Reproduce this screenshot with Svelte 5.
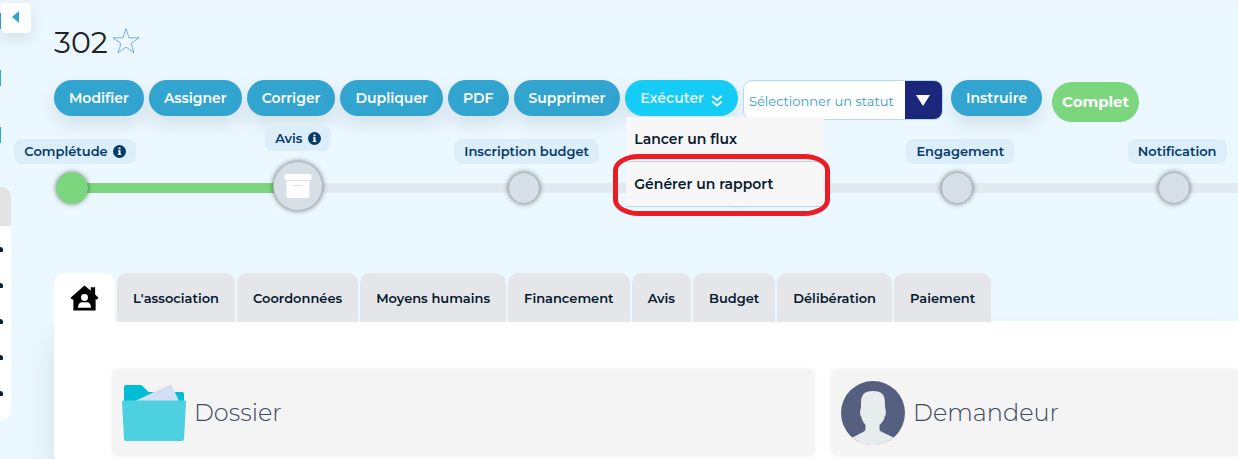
<script lang="ts">
	type Step = { label?: string; info?: boolean; state?: 'done' | 'current' };

	const actions = ['Modifier', 'Assigner', 'Corriger', 'Dupliquer', 'PDF', 'Supprimer'];
	const reports = ['Lancer un flux', 'Générer un rapport'];

	const steps: Step[] = [
		{ label: 'Complétude', info: true, state: 'done' },
		{ label: 'Avis', info: true, state: 'current' },
		{ label: 'Inscription budget' },
		{},
		{ label: 'Engagement' },
		{ label: 'Notification' }
	];

	const tabs = [
		"L'association",
		'Coordonnées',
		'Moyens humains',
		'Financement',
		'Avis',
		'Budget',
		'Délibération',
		'Paiement'
	];

	let menuOpen = $state(true);
	let highlighted = $state('Générer un rapport');
	let activeTab = $state('home');
</script>

<div class="page">
	<button class="collapse" aria-label="Replier le menu">
		<svg viewBox="0 0 8 12" width="8" height="12"><path d="M7 0v12L0 6z" fill="#32a4d0" /></svg>
	</button>

	<aside class="sidebar">
		<div class="dots"><i></i><i></i><i></i></div>
		<div class="side-card">
			<div class="side-head"></div>
			<ul>
				<li></li>
				<li></li>
				<li></li>
				<li></li>
				<li></li>
			</ul>
		</div>
	</aside>

	<main>
		<header class="title">
			<h1>302</h1>
			<button class="star" aria-label="Favori">
				<svg viewBox="0 0 28 28" width="28" height="28">
					<path
						d="M14 1.500l3 9.300h10l-8 5.700 3 9.300-8-5.700-8 5.700 3-9.300-8-5.700h10z"
						fill="none"
						stroke="#5b9bd5"
						stroke-width="0.800"
					/>
				</svg>
			</button>
		</header>

		<div class="toolbar">
			{#each actions as action}
				<button class="btn">{action}</button>
			{/each}
			<div class="dropdown">
				<button class="btn open" aria-expanded={menuOpen} onclick={() => (menuOpen = !menuOpen)}>
					Exécuter
					<svg viewBox="0 0 12 12" width="12" height="12">
						<path d="M1.200 1L6 5l4.800-4M1.200 6.500L6 10.500l4.800-4" fill="none" stroke="#fff" stroke-width="1.800" />
					</svg>
				</button>
				{#if menuOpen}
					<ul class="menu">
						{#each reports as item}
							<li class:highlighted={item === highlighted}>
								<a href="#{item}" onclick={() => (highlighted = item)}>{item}</a>
							</li>
						{/each}
					</ul>
				{/if}
			</div>
			<div class="status">
				<select aria-label="Statut">
					<option>Sélectionner un statut</option>
				</select>
				<span class="arrow">
					<svg viewBox="0 0 14 11" width="14" height="11"><path d="M0 0h14L7 11z" fill="#fff" /></svg>
				</span>
			</div>
			<button class="btn instruct">Instruire</button>
			<span class="complete">Complet</span>
		</div>

		<ol class="stepper">
			{#each steps as step}
				<li class={step.state}>
					<div class="node">
						{#if step.label}
							<span class="label">
								{step.label}
								{#if step.info}
									<svg viewBox="0 0 13 13" width="13" height="13">
										<circle cx="6.500" cy="6.500" r="6.500" fill="#043a6b" />
										<path d="M5.500 2.500h2v1.800h-2zM5 5.300h2.500v3.500h.8v1.200H4.800V8.800h.8V6.500H5z" fill="#fff" />
									</svg>
								{/if}
							</span>
						{/if}
						<span class="circle">
							{#if step.state === 'current'}
								<svg viewBox="0 0 28 24" width="28" height="24">
									<rect x="0.500" y="0" width="27" height="6" rx="1.500" fill="#fff" />
									<path d="M2.500 7h23v15a2 2 0 0 1-2 2h-19a2 2 0 0 1-2-2z" fill="#fff" />
									<path d="M9.500 11.500h9" stroke="#d5dfe5" />
								</svg>
							{/if}
						</span>
					</div>
					<div class="line"></div>
				</li>
			{/each}
		</ol>

		<nav class="tabs">
			<button class="home" class:active={activeTab === 'home'} aria-label="Accueil" onclick={() => (activeTab = 'home')}>
				<svg viewBox="0 0 30 26" width="29" height="26">
					<path d="M15 0l6.500 5.500V2H26v7.500l3.500 3.200-1.800 2.200L26.500 14v12h-23V14l-1.200 .9-1.800-2.200z" fill="#000" />
					<circle cx="15" cy="12.500" r="3.600" fill="#fff" />
					<path d="M8.300 23.200c0-4 2.200-5.700 4.200-5.700h5c2 0 4.200 1.700 4.200 5.700z" fill="#fff" />
				</svg>
			</button>
			{#each tabs as tab}
				<button class:active={activeTab === tab} onclick={() => (activeTab = tab)}>{tab}</button>
			{/each}
		</nav>

		<section class="panel">
			<article class="card">
				<svg viewBox="0 0 64 64" width="64" height="64">
					<path d="M2 20V6a2 2 0 0 1 2-2h14q1.500 0 2.500 1l6 6H60a2 2 0 0 1 2 2v8z" fill="#00bcd6" />
					<path d="M13 20L47 4q2-.8 3 1l7 15z" fill="#d3e0f4" />
					<path d="M1 19.500h62q1 0 1 1.500l-2 37q0 2-2 2H4q-2 0-2-2L0 21q0-1.500 1-1.500z" fill="#4dd0e0" />
				</svg>
				<h2>Dossier</h2>
			</article>
			<article class="card">
				<svg viewBox="0 0 64 64" width="64" height="64">
					<circle cx="32" cy="32" r="32" fill="#556080" />
					<path
						d="M11.500 56.500L23 50.500q1.500-1 1.500-2.500V44c-2.500-3-4-6-4.200-8.500-1.500-1-1.500-6-.3-9 0-6-.2-10 2.300-13 2-2.600 5.500-3.500 9.700-3.500s7.700.9 9.700 3.500c2.500 3 2.300 7 2.300 13 1.200 3 1.200 8-.3 9-.2 2.500-1.700 5.500-5.200 8.500v4q0 1.500 1.500 2.500l12.500 6C47 61.500 39.500 64 32 64s-15-2.500-20.500-7.500z"
						fill="#e7eced"
					/>
				</svg>
				<h2>Demandeur</h2>
			</article>
		</section>
	</main>
</div>

<style>
	:global(body) {
		background: #ebf8ff;
	}

	.page {
		position: relative;
		display: flex;
		min-height: 100vh;
		overflow: hidden;
		background: linear-gradient(#eef4fe, #ebf8ff 10px);
		font-family: Montserrat, Inter, 'Open Sans', sans-serif;
	}

	button {
		border: 0;
		padding: 0;
		font-family: inherit;
		cursor: pointer;
	}

	ul,
	ol {
		margin: 0;
		padding: 0;
		list-style: none;
	}

	.collapse {
		position: absolute;
		top: 3px;
		left: 1px;
		z-index: 2;
		width: 30px;
		height: 30px;
		border-radius: 4px;
		background: #fff;
		box-shadow: 0 6px 16px rgba(0, 0, 0, 0.1);
	}

	.sidebar {
		flex: 0 0 11px;
		width: 11px;
		overflow: hidden;
	}

	.dots {
		box-sizing: border-box;
		height: 187px;
		padding-top: 13px;
		display: flex;
		flex-direction: column;
		gap: 41px;
	}

	.dots i {
		width: 1px;
		height: 16px;
		background: #32a4d0;
	}

	.side-card {
		height: 233px;
		background: #fff;
		border-radius: 0 12px 14px 0;
		overflow: hidden;
	}

	.side-head {
		height: 39px;
		background: #e4e4e4;
	}

	.side-card ul {
		padding-top: 21px;
		display: flex;
		flex-direction: column;
		gap: 31px;
	}

	.side-card li {
		width: 3px;
		height: 5px;
		border-radius: 0 3px 1px 0;
		background: #06203a;
	}

	main {
		flex: 1;
		min-width: 0;
		display: flex;
		flex-direction: column;
		padding: 24px 0 0 43px;
	}

	.title {
		display: flex;
		align-items: center;
		gap: 4px;
		height: 36px;
	}

	h1 {
		margin: 0;
		font-size: 30px;
		font-weight: 400;
		color: #222;
	}

	.star {
		height: 36px;
		background: none;
	}

	.toolbar {
		display: flex;
		align-items: flex-start;
		gap: 5px;
		margin-top: 20px;
	}

	.btn {
		height: 36px;
		padding: 0 15px;
		border-radius: 18px;
		background: #32a4d0;
		box-shadow: 0 8px 20px rgba(0, 0, 0, 0.1);
		color: #fff;
		font-size: 14px;
		font-weight: 600;
		white-space: nowrap;
	}

	.btn.open {
		display: flex;
		align-items: center;
		gap: 7px;
		background: #15ccf6;
		color: #dff3fb;
	}

	.open svg {
		margin-top: 6px;
	}

	.dropdown {
		position: relative;
	}

	.menu {
		position: absolute;
		top: 37px;
		left: 1px;
		z-index: 3;
		width: 198px;
		background: #f7f7f7;
	}

	.menu li {
		position: relative;
		border-bottom: 1px solid #b4d8ee;
	}

	.menu a {
		display: block;
		padding: 0 8px;
		line-height: 44px;
		color: #06192e;
		font-size: 14px;
		font-weight: 600;
		text-decoration: none;
	}

	.menu .highlighted::after {
		content: '';
		position: absolute;
		inset: -8px -6px -10px -13px;
		border: 5px solid #ed1c24;
		border-radius: 26px / 16px;
		pointer-events: none;
	}

	.status {
		position: relative;
		width: 200px;
		height: 40px;
	}

	.status select {
		width: 100%;
		height: 100%;
		padding: 2px 40px 0 5px;
		border: 1px solid #b4d8ee;
		border-radius: 9px;
		appearance: none;
		background: #fff;
		color: #3a9cca;
		font-family: inherit;
		font-size: 13px;
	}

	.arrow {
		position: absolute;
		top: 1px;
		right: 1px;
		bottom: 1px;
		width: 37px;
		display: flex;
		align-items: center;
		justify-content: center;
		border-radius: 0 8px 8px 0;
		background: #1c267a;
		pointer-events: none;
	}

	.instruct {
		margin-left: 3px;
	}

	.complete {
		margin: 2px 0 0 5px;
		padding: 0 10px;
		border-radius: 20px;
		background: #7bd67e;
		color: #fff;
		font-size: 15px;
		font-weight: 700;
		line-height: 40px;
	}

	.stepper {
		display: flex;
		margin-top: 40px;
	}

	.stepper li {
		flex: 18 0 auto;
		display: flex;
		align-items: center;
		height: 52px;
	}

	.stepper li:last-child {
		flex-grow: 5;
	}

	.node {
		position: relative;
		display: flex;
		justify-content: center;
		width: 36px;
	}

	.label {
		position: absolute;
		bottom: 100%;
		display: flex;
		align-items: center;
		gap: 5px;
		margin: 0 0 8px 6px;
		padding: 0 10px;
		border-radius: 8px;
		background: #dceef9;
		color: #043a6b;
		font-size: 13px;
		font-weight: 600;
		line-height: 25px;
		white-space: nowrap;
	}

	.circle {
		box-sizing: border-box;
		z-index: 1;
		display: flex;
		align-items: center;
		justify-content: center;
		width: 32px;
		height: 32px;
		border: 1px solid #b4bbc0;
		border-radius: 50%;
		background: #d5dfe5;
		box-shadow: 0 0 5px rgba(0, 0, 0, 0.5);
	}

	.done .circle {
		border-color: #7bd67e;
		background: #7bd67e;
	}

	.current .node {
		width: 54px;
		padding-bottom: 4px;
	}

	.current .circle {
		width: 50px;
		height: 50px;
	}

	.current .label {
		margin: 0 0 10px;
	}

	.line {
		flex: 1;
		height: 10px;
		margin: 0 -3px;
		background: #e0eaf0;
	}

	.done .line {
		background: #7bd67e;
	}

	.tabs {
		position: relative;
		z-index: 1;
		display: flex;
		gap: 2px;
		margin: 59px 0 -1px;
	}

	.tabs button {
		height: 49px;
		padding: 0 16px;
		border-radius: 10px 10px 0 0;
		background: #e5e6ea;
		color: #06192e;
		font-size: 13px;
		font-weight: 600;
		white-space: nowrap;
	}

	.tabs .active {
		background: #fff;
	}

	.home svg {
		display: block;
	}

	.panel {
		flex: 1;
		display: grid;
		grid-template-columns: 19fr 11fr;
		align-content: start;
		gap: 18px;
		padding: 49px 0 4px 59px;
		background: #fff;
		box-shadow: 0 20px 30px rgba(0, 40, 60, 0.12);
	}

	.card {
		display: flex;
		align-items: center;
		gap: 8px;
		height: 85px;
		padding-left: 9px;
		border-radius: 5px;
		background: #f4f4f4;
		box-shadow: 0 0 4px rgba(0, 0, 0, 0.1);
	}

	.card:last-child {
		border-radius: 5px 0 0 5px;
	}

	h2 {
		margin: 0;
		color: #3f4a60;
		font-size: 24px;
		font-weight: 300;
	}
</style>
